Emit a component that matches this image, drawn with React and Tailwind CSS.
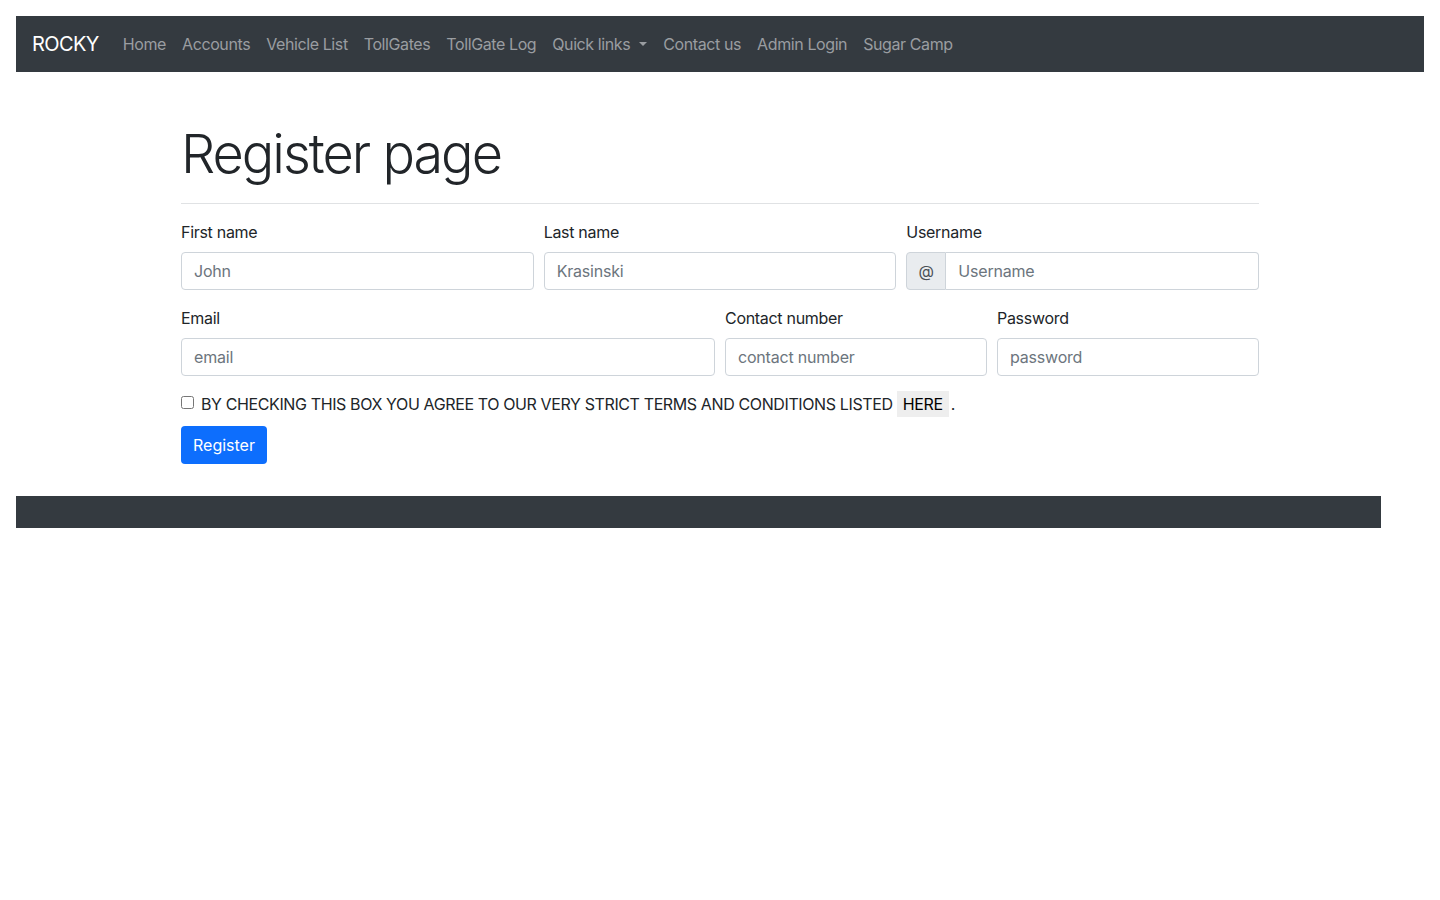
import React from "react";

const navLinks = ["Home", "Accounts", "Vehicle List", "TollGates", "TollGate Log"];
const navLinks2 = ["Contact us", "Admin Login", "Sugar Camp"];

function Field({ label, placeholder, className = "" }) {
  return (
    <div className={className}>
      <label className="block mb-2 leading-6 tracking-[-0.3px]">{label}</label>
      <input
        placeholder={placeholder}
        className="w-full h-[38px] px-3 border border-[#ced4da] rounded-[4px] text-base text-[#495057] placeholder:text-[#6c757d] outline-none tracking-[-0.2px]"
      />
    </div>
  );
}

export default function App() {
  return (
    <div
      className="p-4 text-[#212529] text-base"
      style={{ fontFamily: "Inter, 'Noto Sans', sans-serif" }}
    >
      {/* navbar */}
      <nav className="h-14 bg-[#343a40] flex items-center px-4">
        <span className="text-white text-xl mr-4 tracking-[-0.6px]">ROCKY</span>
        <div className="flex items-center">
          {navLinks.map((l) => (
            <a key={l} className="px-2 text-[#9a9da1] tracking-[-0.4px]">{l}</a>
          ))}
          <a className="px-2 text-[#9a9da1] flex items-center tracking-[-0.4px]">
            Quick links
            <span className="ml-[9px] w-0 h-0 border-x-[4px] border-x-transparent border-t-[4px] border-t-[#9a9da1]"></span>
          </a>
          {navLinks2.map((l) => (
            <a key={l} className="px-2 text-[#9a9da1] tracking-[-0.4px]">{l}</a>
          ))}
        </div>
      </nav>

      <div className="w-[1078px] mx-auto pt-[50px] pb-8">
        <h1 className="text-[54px] font-light leading-[1.2] mb-2 tracking-[-2px]">Register page</h1>
        <hr className="mt-4 mb-4 border-0 border-t border-[#e0e2e4]" />

        <form>
          <div className="grid grid-cols-3 gap-x-[10px] mb-4">
            <Field label="First name" placeholder="John" />
            <Field label="Last name" placeholder="Krasinski" />
            <div>
              <label className="block mb-2 leading-6 tracking-[-0.3px]">Username</label>
              <div className="flex h-[38px]">
                <span className="w-10 flex items-center justify-center bg-[#e9ecef] border border-[#ced4da] rounded-l-[4px] text-[#495057]">@</span>
                <input
                  placeholder="Username"
                  className="flex-1 min-w-0 px-3 border border-l-0 border-[#ced4da] rounded-r-[4px] placeholder:text-[#6c757d] outline-none tracking-[-0.2px]"
                />
              </div>
            </div>
          </div>

          <div className="grid grid-cols-4 gap-x-[10px] mb-4">
            <Field className="col-span-2" label="Email" placeholder="email" />
            <Field label="Contact number" placeholder="contact number" />
            <Field label="Password" placeholder="password" />
          </div>

          <div className="flex items-center h-6 mb-[10px]">
            <input type="checkbox" className="w-[13px] h-[13px] mr-[7px] -mt-[2px]" />
            <span className="tracking-[-0.38px]">
              BY CHECKING THIS BOX YOU AGREE TO OUR VERY STRICT TERMS AND CONDITIONS LISTED{" "}
              <span className="inline-block bg-[#eeeeee] px-[6px] leading-[26px] text-black">HERE</span>
              <span className="ml-[2px]">.</span>
            </span>
          </div>

          <button
            type="button"
            className="h-[38px] px-3 bg-[#0d6efd] text-white rounded-[4px]"
          >
            Register
          </button>
        </form>
      </div>

      <footer className="w-[1365px] h-8 bg-[#343a40]"></footer>
    </div>
  );
}
